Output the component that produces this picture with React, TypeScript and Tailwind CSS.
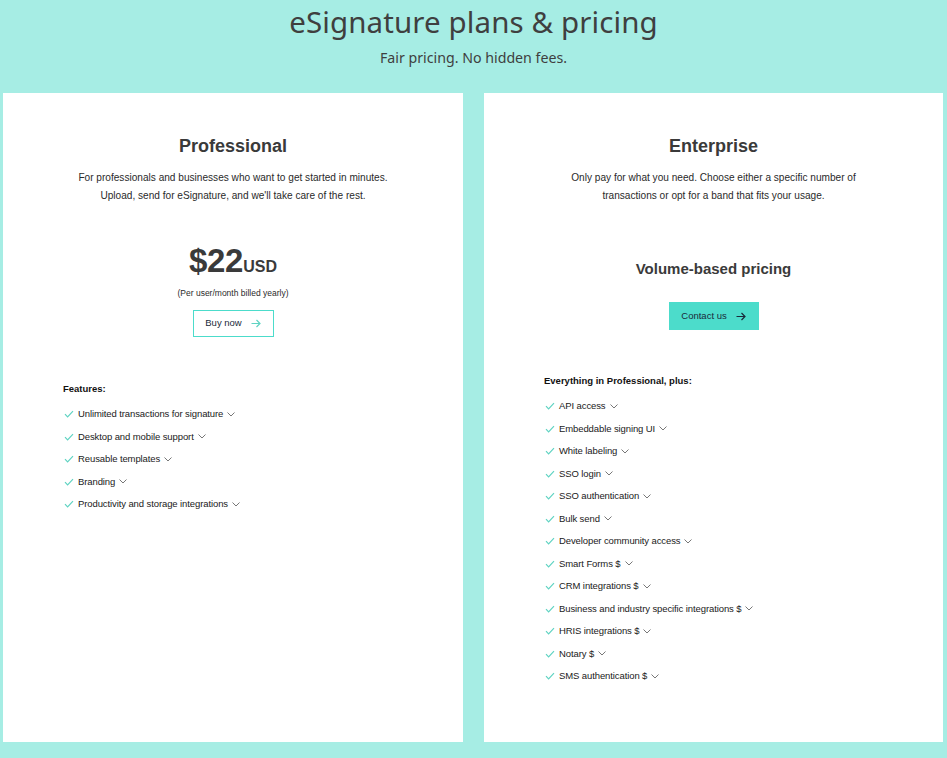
import React from "react";

const Check = () => (
  <svg width="10" height="8" viewBox="0 0 10 8" fill="none" className="shrink-0">
    <path d="M1 4.2 L3.6 6.8 L9 1.2" stroke="#5fd3c2" strokeWidth="1.2" />
  </svg>
);

const Chevron = () => (
  <svg width="8" height="5" viewBox="0 0 8 5" fill="none" className="shrink-0 ml-[4px]">
    <path d="M0.5 0.5 L4 4 L7.5 0.5" stroke="#777" strokeWidth="1" />
  </svg>
);

const Arrow = ({ color }: { color: string }) => (
  <svg width="10" height="9" viewBox="0 0 10 9" fill="none" className="shrink-0">
    <path d="M0.5 4.5 H9 M5.5 1 L9 4.5 L5.5 8" stroke={color} strokeWidth="1.2" />
  </svg>
);

const Item = ({ text }: { text: string }) => (
  <li className="flex items-center h-[22.5px]">
    <span className="mr-[4px] ml-[1px]"><Check /></span>
    <span className="text-[9.5px] text-[#1a1a1a] tracking-[-0.1px]">{text}</span>
    <Chevron />
  </li>
);

export default function App() {
  const pro = [
    "Unlimited transactions for signature",
    "Desktop and mobile support",
    "Reusable templates",
    "Branding",
    "Productivity and storage integrations",
  ];
  const ent = [
    "API access",
    "Embeddable signing UI",
    "White labeling",
    "SSO login",
    "SSO authentication",
    "Bulk send",
    "Developer community access",
    "Smart Forms $",
    "CRM integrations $",
    "Business and industry specific integrations $",
    "HRIS integrations $",
    "Notary $",
    "SMS authentication $",
  ];
  return (
    <div
      className="w-[947px] h-[758px] bg-[#a6ede4] flex flex-col overflow-hidden"
      style={{ fontFamily: "'Liberation Sans', Arial, sans-serif" }}
    >
      <div className="flex flex-col items-center">
        <h1 className="text-[29.5px] leading-[38px] mt-[3px] text-[#3f3f3f] tracking-[0.1px]" style={{ fontFamily: "'Noto Sans', sans-serif" }}>
          eSignature plans &amp; pricing
        </h1>
        <p className="text-[14.2px] leading-[20px] mt-[7px] text-[#3f3f3f]" style={{ fontFamily: "'Noto Sans', sans-serif" }}>
          Fair pricing. No hidden fees.
        </p>
      </div>
      <div className="flex gap-[21px] pl-[3px] pr-[4px] mt-[25px]">
        <div className="w-[460px] h-[649px] bg-white flex flex-col">
          <div className="flex flex-col items-center">
            <h2 className="text-[18px] font-bold leading-[22px] mt-[42px] text-[#3a3a3a]">Professional</h2>
            <p className="text-[10.1px] leading-[18px] mt-[12px] text-[#2a2a2a] text-center">
              For professionals and businesses who want to get started in minutes.
              <br />
              Upload, send for eSignature, and we&apos;ll take care of the rest.
            </p>
            <div className="mt-[38px] flex items-baseline text-[#3a3a3a] font-bold">
              <span className="text-[33px] leading-[36px] tracking-[-0.3px]">$22</span>
              <span className="text-[16px]">USD</span>
            </div>
            <p className="text-[8.5px] leading-[12px] mt-[8px] text-[#2a2a2a]">(Per user/month billed yearly)</p>
            <button className="mt-[11px] w-[81px] h-[27px] border border-solid border-[#4cdccb] flex items-center justify-center gap-[9px] text-[9.5px] text-[#1a2a3a]">
              Buy now <Arrow color="#5fd3c2" />
            </button>
          </div>
          <div className="pl-[60px] mt-[46px]">
            <p className="text-[9.5px] font-bold text-[#111] leading-[12px]">Features:</p>
            <ul className="mt-[8px]">
              {pro.map((t) => (
                <Item key={t} text={t} />
              ))}
            </ul>
          </div>
        </div>
        <div className="w-[459px] h-[649px] bg-white flex flex-col">
          <div className="flex flex-col items-center">
            <h2 className="text-[18px] font-bold leading-[22px] mt-[42px] text-[#3a3a3a]">Enterprise</h2>
            <p className="text-[10.1px] leading-[18px] mt-[12px] text-[#2a2a2a] text-center">
              Only pay for what you need. Choose either a specific number of
              <br />
              transactions or opt for a band that fits your usage.
            </p>
            <h3 className="text-[15px] font-bold leading-[20px] mt-[54px] text-[#3a3a3a]">Volume-based pricing</h3>
            <button className="mt-[23px] w-[90px] h-[28px] bg-[#4cdccb] flex items-center justify-center gap-[9px] text-[9.5px] text-[#1a2a3a]">
              Contact us <Arrow color="#1a2a3a" />
            </button>
          </div>
          <div className="pl-[60px] mt-[45px]">
            <p className="text-[9.5px] font-bold text-[#111] leading-[12px]">Everything in Professional, plus:</p>
            <ul className="mt-[8px]">
              {ent.map((t) => (
                <Item key={t} text={t} />
              ))}
            </ul>
          </div>
        </div>
      </div>
    </div>
  );
}
